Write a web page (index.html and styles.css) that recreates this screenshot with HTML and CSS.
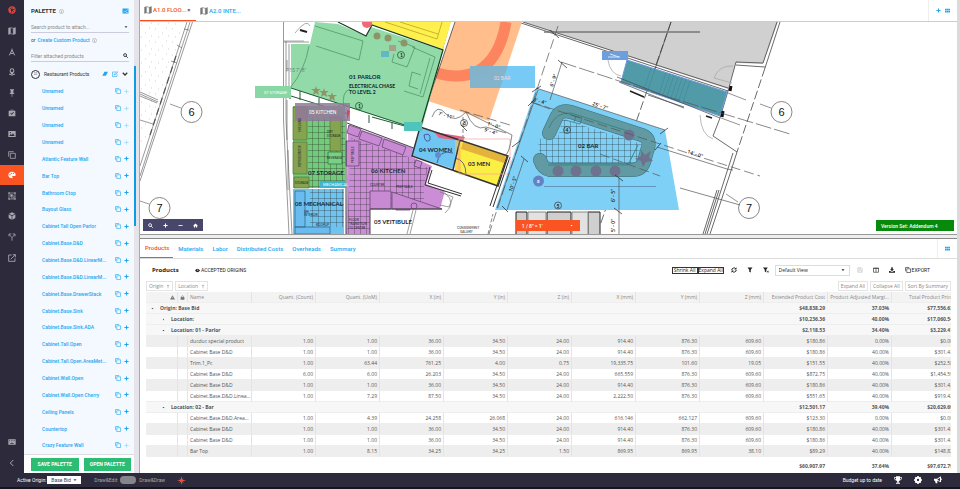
FILE: index.html
```html
<!DOCTYPE html>
<html lang="en">
<head>
<meta charset="utf-8">
<title>Palette</title>
<link rel="stylesheet" href="styles.css">
</head>
<body>
<svg class="sprite" aria-hidden="true">
  <symbol id="logo" viewBox="0 0 24 24"><circle cx="12" cy="12" r="11" fill="#e2453c"/><path d="M12 12 5 5M12 12l9-3M12 12l-3 10M12 12l6 7M12 12V3" stroke="#2d2b3a" stroke-width="2"/><circle cx="12" cy="12" r="3" fill="#2d2b3a"/></symbol>
  <symbol id="map" viewBox="0 0 24 24"><path d="M1 3l7-2v20l-7 2zM16 3l7-2v20l-7 2z"/><path d="M8 2l8 2v18l-8-2" fill="none" stroke="currentColor" stroke-width="2"/></symbol>
  <symbol id="compass" viewBox="0 0 24 24"><path d="M12 2v5M12 6L4 22M12 6l8 16M7 15q5 4 10 0" fill="none" stroke="currentColor" stroke-width="3"/></symbol>
  <symbol id="pin" viewBox="0 0 24 24"><path fill-rule="evenodd" d="M12 1a7 7 0 0 1 7 7c0 5-7 12-7 12S5 13 5 8a7 7 0 0 1 7-7zm0 3a4 4 0 1 0 0 8 4 4 0 0 0 0-8z"/><path d="M3 18q9 7 18 0" fill="none" stroke="currentColor" stroke-width="3"/></symbol>
  <symbol id="tack" viewBox="0 0 24 24"><path d="M6 1h12v3h-2v7l4 4h-7v8h-2v-8H4l4-4V4H6z"/></symbol>
  <symbol id="task" viewBox="0 0 24 24"><path fill-rule="evenodd" d="M2 5h6V2h8v3h6v17H2zM10 4v2h4V4zM7 13l4 5 7-8-2-2-5 6-2-3z"/></symbol>
  <symbol id="image" viewBox="0 0 24 24"><path fill-rule="evenodd" d="M1 3h22v18H1zM4 18h16l-5-8-4 5-3-3zM7 6a2 2 0 1 0 0 4 2 2 0 0 0 0-4z"/></symbol>
  <symbol id="copy" viewBox="0 0 24 24"><path d="M17 2H2v15M7 7h15v15H7z" fill="none" stroke="currentColor" stroke-width="2.4"/></symbol>
  <symbol id="paint" viewBox="0 0 24 24"><path fill-rule="evenodd" d="M12 2C6 2 1 6 1 12s5 10 11 10c3 0 2-3 1-4s0-3 2-3h4c3 0 4-2 4-4 0-5-5-9-11-9zM6 9a2 2 0 1 1 0 4 2 2 0 0 1 0-4zm4-4a2 2 0 1 1 0 4 2 2 0 0 1 0-4zm6 0a2 2 0 1 1 0 4 2 2 0 0 1 0-4z"/></symbol>
  <symbol id="group" viewBox="0 0 24 24"><path d="M3 3h18v18H3z" fill="none" stroke="currentColor" stroke-width="2"/><path d="M1 1h4v4H1zM19 1h4v4h-4zM1 19h4v4H1zM19 19h4v4h-4zM7 7h7v7H7z"/><path d="M16 11h2v7h-8v-2" fill="none" stroke="currentColor" stroke-width="2"/></symbol>
  <symbol id="box" viewBox="0 0 24 24"><path d="M12 1l9 4-9 5-9-5zM2 7l9 5v11l-9-5zM22 7l-9 5v11l9-5z"/></symbol>
  <symbol id="split" viewBox="0 0 24 24"><path d="M12 23v-9L4 5M12 14l8-9M3 10V3h7M14 3h7v7" fill="none" stroke="currentColor" stroke-width="2.4"/></symbol>
  <symbol id="open" viewBox="0 0 24 24"><path d="M11 3H2v19h19v-9M14 2h8v8M22 2L8 16" fill="none" stroke="currentColor" stroke-width="2.6"/></symbol>
  <symbol id="keys" viewBox="0 0 24 24"><path fill-rule="evenodd" d="M1 4h22v16H1zM4 7v2h2V7zm5 0v2h2V7zm5 0v2h2V7zm4 0v2h2V7zM4 11v2h2v-2zm5 0v2h2v-2zm5 0v2h2v-2zM7 16v2h10v-2z"/></symbol>
  <symbol id="left" viewBox="0 0 24 24"><path d="M16 3l-9 9 9 9" fill="none" stroke="currentColor" stroke-width="3"/></symbol>
  <symbol id="down" viewBox="0 0 24 24"><path d="M3 7l9 9 9-9" fill="none" stroke="currentColor" stroke-width="5"/></symbol>
  <symbol id="caret" viewBox="0 0 24 24"><path d="M3 7h18l-9 11z"/></symbol>
  <symbol id="right" viewBox="0 0 24 24"><path d="M8 4l9 8-9 8z"/></symbol>
  <symbol id="info" viewBox="0 0 24 24"><circle cx="12" cy="12" r="10" fill="none" stroke="currentColor" stroke-width="3"/><path d="M12 10v8M12 6v2" stroke="currentColor" stroke-width="4"/></symbol>
  <symbol id="card" viewBox="0 0 24 24"><path d="M0 2h24v20H0z"/><path d="M3 18l6-7 4 4 8-10M14 18h7" stroke="#fff" stroke-width="2" fill="none"/></symbol>
  <symbol id="find" viewBox="0 0 24 24"><circle cx="10" cy="10" r="7" fill="none" stroke="currentColor" stroke-width="4"/><path d="M15 15l8 8" stroke="currentColor" stroke-width="4"/></symbol>
  <symbol id="erase" viewBox="0 0 24 24"><path d="M10 3h14l-9 16H1z"/></symbol>
  <symbol id="edit" viewBox="0 0 24 24"><path d="M15 4H2v18h18V13M8 16l2-5 11-9 3 3-11 9z" fill="none" stroke="currentColor" stroke-width="2.4"/></symbol>
  <symbol id="plus" viewBox="0 0 24 24"><path d="M12 2v20M2 12h20" stroke="currentColor" stroke-width="5"/></symbol>
  <symbol id="minus" viewBox="0 0 24 24"><path d="M2 12h20" stroke="currentColor" stroke-width="4"/></symbol>
  <symbol id="home" viewBox="0 0 24 24"><path d="M12 2L0 13h4v9h6v-6h4v6h6v-9h4z"/></symbol>
  <symbol id="cells" viewBox="0 0 24 24"><path d="M0 3h7v8H0zM8 3h8v8H8zM17 3h7v8h-7zM0 13h7v8H0zM8 13h8v8H8zM17 13h7v8h-7z"/></symbol>
  <symbol id="eye" viewBox="0 0 24 24"><path d="M0 12q12-17 24 0-12 17-24 0z"/><circle cx="13" cy="10" r="3" fill="#fff"/></symbol>
  <symbol id="sync" viewBox="0 0 24 24"><path d="M3 12a9 9 0 0 1 16-5M21 12a9 9 0 0 1-16 5" fill="none" stroke="currentColor" stroke-width="4"/><path d="M22 1v9h-9zM2 23v-9h9z"/></symbol>
  <symbol id="funnel" viewBox="0 0 24 24"><path d="M2 2h20l-7 9v11l-6-3v-8z"/></symbol>
  <symbol id="funnelx" viewBox="0 0 24 24"><path d="M0 2h19l-6 9v10l-6-3v-7z"/><path d="M16 15l7 7M23 15l-7 7" stroke="currentColor" stroke-width="3"/></symbol>
  <symbol id="save" viewBox="0 0 24 24"><path d="M3 3h14l4 4v14H3zM7 3v6h8V3M7 21v-8h10v8" fill="none" stroke="currentColor" stroke-width="2"/></symbol>
  <symbol id="cols" viewBox="0 0 24 24"><path d="M2 4h20v17H2zM2 6h20M12 6v15" fill="none" stroke="currentColor" stroke-width="2.4"/></symbol>
  <symbol id="load" viewBox="0 0 24 24"><path d="M9 1h6v8h5l-8 8-8-8h5zM0 16h5l3 3h8l3-3h5v7H0z"/></symbol>
  <symbol id="warn" viewBox="0 0 24 24"><path d="M12 1l12 21H0zM11 8v8h2V8z" fill-rule="evenodd"/></symbol>
  <symbol id="lock" viewBox="0 0 24 24"><path d="M3 10h18v13H3z"/><path d="M7 11V7q5-8 10 0v4" fill="none" stroke="currentColor" stroke-width="3"/></symbol>
  <symbol id="up" viewBox="0 0 24 24"><path d="M12 23V3M5 9l7-7 7 7" fill="none" stroke="currentColor" stroke-width="3"/></symbol>
  <symbol id="spark" viewBox="0 0 24 24"><path d="M12 0l2 9 6-5-5 6 9 2-9 2 5 6-6-5-2 9-2-9-6 5 5-6-9-2 9-2-5-6 6 5z"/></symbol>
  <symbol id="cup" viewBox="0 0 24 24"><path d="M6 1h12v3h6q0 9-8 10l-2 3v3h4v3H6v-3h4v-3l-2-3Q0 13 0 4h6zM2 6q1 4 4 5V6zm16 0v5q3-1 4-5z" fill-rule="evenodd"/></symbol>
  <symbol id="gear" viewBox="0 0 24 24"><circle cx="12" cy="12" r="6.500" fill="none" stroke="currentColor" stroke-width="6"/><path d="M12 0v5M12 19v5M0 12h5M19 12h5M4 4l3 3M17 17l3 3M4 20l3-3M17 7l3-3" stroke="currentColor" stroke-width="5"/></symbol>
  <symbol id="horn" viewBox="0 0 24 24"><path d="M0 8h9L21 1v18l-11-5v8H5l-2-8H0zM18 6l-7 4v2l7 3z" fill-rule="evenodd"/><path d="M22 7l2 1v4l-2 1z"/></symbol>
</svg>

<div class="app">
  <nav class="rail" aria-label="Sections">
    <div class="rail-list">
      <a href="#" aria-label="Home"><svg class="ic"><use href="#logo"/></svg></a>
      <a href="#" aria-label="Plans"><svg class="ic"><use href="#map"/></svg></a>
      <a href="#" aria-label="Drafting"><svg class="ic"><use href="#compass"/></svg></a>
      <a href="#" aria-label="Places"><svg class="ic"><use href="#pin"/></svg></a>
      <a href="#" aria-label="Pins"><svg class="ic"><use href="#tack"/></svg></a>
      <a href="#" aria-label="Tasks"><svg class="ic"><use href="#task"/></svg></a>
      <a href="#" aria-label="Images"><svg class="ic"><use href="#image"/></svg></a>
      <a href="#" aria-label="Copies"><svg class="ic"><use href="#copy"/></svg></a>
      <a href="#" class="on" aria-label="Palette"><svg class="ic"><use href="#paint"/></svg></a>
      <a href="#" aria-label="Groups"><svg class="ic"><use href="#group"/></svg></a>
      <a href="#" aria-label="Models"><svg class="ic"><use href="#box"/></svg></a>
      <a href="#" aria-label="Branches"><svg class="ic"><use href="#split"/></svg></a>
      <a href="#" aria-label="Open"><svg class="ic"><use href="#open"/></svg></a>
    </div>
    <div class="rail-end">
      <a href="#" aria-label="Shortcuts"><svg class="ic"><use href="#keys"/></svg></a>
      <a href="#" aria-label="Collapse"><svg class="ic"><use href="#left"/></svg></a>
    </div>
  </nav>

  <aside class="palette">
    <div class="palette-top">
      <h1>PALETTE <svg class="ic dim"><use href="#info"/></svg><svg class="ic card"><use href="#card"/></svg></h1>
      <div class="field"><input aria-label="Search product to attach" placeholder="Search product to attach..."><svg class="ic small"><use href="#caret"/></svg></div>
      <p class="or">or <a href="#">Create Custom Product</a> <svg class="ic dim"><use href="#info"/></svg></p>
      <div class="field"><input aria-label="Filter attached products" placeholder="Filter attached products"><svg class="ic"><use href="#find"/></svg></div>
    </div>
    <div class="palette-group">
      <span class="count">22</span><span class="grow">Restaurant Products</span>
      <svg class="ic blue"><use href="#erase"/></svg><svg class="ic blue"><use href="#edit"/></svg><svg class="ic"><use href="#down"/></svg>
    </div>
    <ul class="items" id="items"></ul>
    <div class="palette-end"><button>SAVE PALETTE</button><button>OPEN PALETTE</button></div>
  </aside>
  <div class="track"><span></span></div>

  <main class="main">
    <div class="sheets">
      <a class="sheet on" href="#"><svg class="ic"><use href="#map"/></svg>A1.0 FLOO...<b>×</b></a>
      <a class="sheet" href="#"><svg class="ic"><use href="#map"/></svg>A2.0 INTE...</a>
      <div class="corner"><svg class="ic"><use href="#plus"/></svg><svg class="ic"><use href="#cells"/></svg></div>
    </div>

    <section class="plan" aria-label="Floor plan">
      <svg class="drawing" viewBox="140 22 817 212" preserveAspectRatio="xMidYMid slice">
        <defs>
          <pattern id="tile" width="6" height="6" patternUnits="userSpaceOnUse"><path d="M0 0H6M0 0V6" stroke="#222" stroke-opacity=".75" stroke-width=".8" fill="none"/></pattern>
          <pattern id="grit" width="17" height="13" patternUnits="userSpaceOnUse"><path d="M2 3h.6M9 7h.6M13 2h.6M5 11h.6M15 10h.6" stroke="#777" stroke-width=".6"/></pattern>
        </defs>
        <path d="M140 22h45L140 158z" fill="url(#grit)"/>
        <g fill="none" stroke="#555" stroke-width=".6">
          <path d="M187 22L140 166M190 22L140 176M192.500 22L140 181M184 29l5 1M177 45l5 3M171 61l6 2M153 124l-13-4M140 92l18 8M140 94l18 8M140 96l17 7M170 104l11 4M140 201l9 3"/>
          <path d="M176 56L150 135" stroke-width="1.200" stroke-dasharray="7 4"/>
          <path d="M283.500 22V120L289 234M286 41V120L292 234M284 42h25M289 44V90M287 60v10M287 100v40M288 150v40"/>
        </g>
        <g fill="#fff" stroke="#555" stroke-width=".7"><circle cx="191.500" cy="112" r="10.500"/><circle cx="159.500" cy="208" r="10.500"/><circle cx="781.500" cy="112" r="10.500"/><circle cx="749" cy="208" r="10.500"/></g>
        <g class="axis"><text x="191.500" y="116">6</text><text x="159.500" y="212">7</text><text x="781.500" y="116">6</text><text x="749" y="212">7</text></g>

        <path d="M523 22L728 89l8-26 27 1 15-42z" fill="#d0d0d0"/>
        <g fill="none" stroke="#444" stroke-width=".8">
          <path d="M518 22L728 91l8-29 27 1 14-41M523 22L728 88M736 65l29 2M780 22L765 68M671 22l-17 50M728 91L720 118M713 136l24 16M720 118l-7 18M733 153l-26 81M737 152l-8 25-19 57M719 190l-14 44M717 190l-14 44"/>
          <path d="M765 68L737 152M671 22L597 234" stroke-dasharray="9 3"/>
          <path d="M728 93l18 7M760 104l11 4M721 118l19 7M726 194l12 8" stroke="#777"/>
          <path d="M714 78q5-13 19-12M714 78l18 5M608 60q2 14 13 16M700 115q1 20 13 24" stroke="#aaa"/>
          <path d="M544 32h156" stroke="#777" stroke-width="1.400"/>
        </g>
        <path d="M627 60l100 32-7 24-99-34z" fill="#519aa8" stroke="#6c98df" stroke-width="1"/>
        <path d="M666 73l-7 21M670 74l-7 21M674 75l-7 21M678 77l-7 21M682 78l-7 21M686 79l-7 21M690 81l-7 21M651 68l-7 21M655 69l-7 21" stroke="#3f8793" stroke-width=".6"/>
        <path d="M617 77l103 41M619 82l65 26M648 95l36 12" stroke="#444" stroke-width=".7" fill="none"/>
        <path d="M731 86l-1 5M723 111l-1 6" stroke="#111" stroke-width="3"/><path d="M630 91l14 6M706 116l6 2" stroke="#222" stroke-width="1.600"/>
        <rect x="602" y="51" width="26" height="9" fill="#6c9fdb"/>
        <path d="M610 54l9 3M608 57h12" stroke="#d7e6f8" stroke-width="1"/>

        <path d="M455 22h67L489 121 428 101z" fill="#ffbe8c"/>
        <path d="M437 73Q460 80 478 71Q500 58 506 22" fill="none" stroke="#fc855f" stroke-width="11"/>
        <path d="M450 22L420 130M455 22L428 101" stroke="#444" stroke-width=".8"/>
        <path d="M372 22h79l-8 27-73-25z" fill="#fff04d"/>
        <path d="M385 22l52 17 5-17M400 22l38 12" fill="none" stroke="#aa9c22" stroke-width=".7"/>
        <path d="M315 22l23 2 28 12 5-9 72 23-22 81-130-43V44h19z" fill="#92dba8"/>
        <path d="M338 22l28 14 6-11 71 25-23 79" fill="none" stroke="#163b22" stroke-width="1.200"/>
        <path d="M340 22l24 11 5-10-4-2z" fill="#fff"/>
        <circle cx="367" cy="23" r="5" fill="#ed6a76"/>
        <g fill="none" stroke="#4a8c60" stroke-width=".7">
          <path d="M315 26l48 15-4 19-43-14M398 41l17 6-8 20-15-5 2-8M412 47l23 10-12 40-19-6M290 88q15-18 19-42M344 108q-3-16 6-19M430 58l-10 36M421 75l-9-3-3 14 9 3"/>
        </g>
        <g fill="none" stroke="#1f5a34" stroke-width="1"><path d="M291 88l129 42M291 96l58 18M300 91v9M319 98v9M339 105v8M369 115v8M392 123v6M372 117l47 13M290 89v10"/></g>
        <g fill="#8f9468"><circle cx="377" cy="36" r="3.500"/><circle cx="388" cy="38" r="3.500"/><circle cx="404" cy="43" r="3.500"/><path d="M316 86l1 3h4l-3 2 1 4-3-2-3 2 1-4-3-2h4zM324 88l1 3h4l-3 2 1 4-3-2-3 2 1-4-3-2h4zM332 92l1 3h4l-3 2 1 4-3-2-3 2 1-4-3-2h4z"/></g>
        <path d="M381 51h8v6h-8z" fill="#61b7c3"/><path d="M389 45h7v6h-7z" fill="#a79f89"/>
        <g fill="none" stroke="#28563a" stroke-width=".8"><circle cx="401" cy="55" r="3.500"/><circle cx="359" cy="106" r="3.500"/></g>
        <text x="400" y="57" class="note">1</text><text x="358" y="108" class="note">1</text>
        <path d="M295 33q12-15 15-7M284 41h20" fill="none" stroke="#888" stroke-width=".7"/>
        <path d="M300 30l7 2" stroke="#222" stroke-width="2"/>
        <text x="286" y="72" class="faint">P15 7'/8"</text>

        <path d="M293 106h52v82h-52z" fill="#72ca7b"/><path d="M308 117h37v71h-37z" fill="url(#tile)"/>
        <g fill="#86a350" stroke="#4d7a35" stroke-width=".7"><path d="M293 107h14v33h-14zM293 142h14v32h-14zM294 177h15v11h-15zM330 117h11v34h-11z"/></g>
        <path d="M328 152h14v12h-14z" fill="#79cf85" stroke="#2f6d3a" stroke-width=".7"/>
        <path d="M293 189h51v45h-51z" fill="#6fc3ef"/><path d="M310 189h34v38h-34z" fill="url(#tile)"/>
        <path d="M295 191h10v36h-10zM295 227h35v7h-35z" fill="#6abcf0" stroke="#2a5f82" stroke-width=".7"/>
        <path d="M348 125l65 23-1 9 20 9-6 18 19 7-5 18h-70v25h-24z" fill="#cb8ed6"/>
        <path d="M351 138l61 20 16 10-4 18v22h-54v26h-23z" fill="url(#tile)"/>
        <g fill="#c88bd3" stroke="#6b4677" stroke-width=".8"><path d="M346 141h13v25h-13zM370 191h21v18h-21zM396 199h14v11h-14zM349 125l12 4-3 8-11-4zM362 131l20 7-3 8-20-7zM384 139l22 8-3 8-21-8zM416 160l6 2-2 6-6-2z"/><path d="M392 192l50 17h-50z"/><circle cx="414" cy="206" r="3"/></g>
        <path d="M346 119v115M347 123l72 27M370 209h72M370 209v25" stroke="#444" stroke-width="1" fill="none"/>
        <path d="M295 103h55v18h-55z" fill="#92789a" fill-opacity=".85"/>
        <path d="M347 110l3 1-3 9z" fill="#d7445f"/>

        <path d="M420 128l41 12-8 29-42-14z" fill="#70c6f2"/>
        <path d="M461 140l46 15-10 30-43-13z" fill="#fbee45"/>
        <path d="M463 142l43 14-2 7-43-14z" fill="#e4b33c"/>
        <path d="M434 132l31 5-2 4-24-3z" fill="#df6688"/><path d="M455 140h6v32h-6z" fill="#ffc447" fill-opacity=".6"/>
        <path d="M420 127l88 29-10 30-86-30zM460 140l-7 30" fill="none" stroke="#333" stroke-width="1.400"/>
        <path d="M507 156l-17 50M510 157l-17 50M430 167l-5 18 36 11M432 170l-4 13 34 11" fill="none" stroke="#333" stroke-width="1"/>
        <path d="M424 135q7-3 6 5-5 4-6-5M437 163q2-14 16-10M466 175q0-15-11-17" fill="none" stroke="#337" stroke-width=".7"/><circle cx="438" cy="155" r="3" fill="#648bc8"/>
        <path d="M459 139h51v35h-51z" fill="none" stroke="#f5a0a0" stroke-width=".7"/>
        <path d="M440 192l13 5-4 10-9-2M445 193q12 10 0 20M416 210l-6 24M413 210l-6 24" fill="none" stroke="#777" stroke-width=".7"/>

        <path d="M536 88l129 42 14 80H495z" fill="#7fd0f7"/>
        <path d="M562 119l80 25-4 19h-98l-2-24 20-1z" fill="url(#tile)"/>
        <path d="M549 133L556 118Q560 109 571 112L642 135Q652 139 647 151L644 162Q641 170 632 170H550Q543 169 540 160" fill="none" stroke="#34727c" stroke-width="14" stroke-linecap="round"/>
        <path d="M549 133L556 118Q560 109 571 112L642 135Q652 139 647 151L644 162Q641 170 632 170H550Q543 169 540 160" fill="none" stroke="#629aa3" stroke-width="13" stroke-linecap="round"/>
        <path d="M549 128q6-16 22-15l63 20M548 165h80l10-20" fill="none" stroke="#37897a" stroke-width="1"/>
        <path d="M566 113l16 5-2 6-15-4M576 116l-2 6" fill="none" stroke="#34727c" stroke-width=".7"/>
        <g fill="#6d728f"><circle cx="558" cy="171" r="5.500"/><circle cx="576" cy="171" r="5.500"/><circle cx="596" cy="171" r="5.500"/><circle cx="615" cy="171" r="5.500"/><circle cx="629" cy="135" r="5.500"/><path d="M641 150l4 5 6-4-2 6 4 4-7 1-3 5-2-6-6-2 6-3z"/></g>
        <circle cx="538.500" cy="181" r="5.500" fill="#6284c5"/><text x="537" y="183" class="tag">S</text>
        <path d="M544 186.500h112" stroke="#5a86b0" stroke-width=".8"/>
        <g fill="none" stroke="#555" stroke-width=".7">
          <path d="M561 62L665 96M665 96L790 134" stroke-dasharray="16 3"/>
          <path d="M558 26L489 234M531 102L700 157 760 176M460 110l50 15M600 154l60 22" stroke-dasharray="10 4"/>
          <path d="M536 88l129 42M562 62l-12 38M531 102l19 7M657 147l70 22M727 169l6 1M680 188l60 17M524 159l-17 51M619 178v56M538 90L497 208"/>
          <path d="M432 117q5-14 14-3 9 10 20-2 8 20 20 15l20 6M466 112l46 23q-3 20-7 20"/>
          <path d="M550 30l9 8M558 60l9 8M532 92l9-6M528 106l6-6M660 134l8-6M655 150l6-7M615 175l8 6M502 206l6 6M521 156l7 6M512 147l8-6M461 125l6 6M614 208l8 6" stroke="#222"/>
          <path d="M463 117v20M488 234l5-20" stroke-dasharray="4 2"/>
        </g>
        <g fill="none" stroke="#333" stroke-width=".7"><circle cx="464" cy="123" r="3.500"/><circle cx="567" cy="130" r="3.500"/><circle cx="558" cy="205.500" r="3.500"/></g>
        <text x="463" y="125" class="note">8</text><text x="565.500" y="132" class="note">4</text><text x="556.500" y="207.500" class="note">5</text>
        <g class="dim-text">
          <text transform="translate(592 105) rotate(18)">25' - 7"</text><text transform="translate(687 153) rotate(18)">14' - 0"</text><text transform="translate(553 87) rotate(-72)">6' - 9"</text>
          <text transform="translate(533 101) rotate(16)">3' - 4"</text><text transform="translate(487 125) rotate(18)">1' - 0"</text><text transform="translate(484 131) rotate(18)">9' - 4"</text><text transform="translate(438 115) rotate(16)">7' - 11"</text>
          <text transform="translate(512 192) rotate(-72)">10' - 5"</text><text transform="translate(615 202) rotate(-90)">6' - 5"</text><text transform="translate(615 232) rotate(-90)">5' - 0"</text>
        </g>
        <g fill="#cfcfcf" stroke="#222" stroke-width="1"><path d="M516 212h11v24h-11zM547 212h24v24h-24zM588 212h12v24h-12z"/><path d="M528 212h18v24h-18zM572 212h16v24h-16z" fill="#e2e2e2" stroke="#888"/></g>
        <path d="M470 66h65v22h-65z" fill="#6ac6f4" fill-opacity=".92"/><path d="M470 66h38L500 88h-30z" fill="#88aec0" fill-opacity=".75"/>
        <text x="494" y="80" class="label pink">02 BAR</text>
        <path d="M255 86h36v12h-36z" fill="#8ad7a6"/><text x="264" y="94" class="tag soft">07 STORAGE</text>
        <text x="309" y="114" class="label">05 KITCHEN</text>
        <path d="M320 181h26v7h-26z" fill="#3db5cf"/><text x="323" y="186" class="tag soft">MECHANICAL</text>
        <path d="M404 122h18v9h-18z" fill="#4ec4bb"/>
        <g class="room">
          <text x="349" y="79">01 PARLOR</text><text x="419" y="152">04 WOMEN</text><text x="468" y="166">03 MEN</text><text x="371" y="173">06 KITCHEN</text><text x="308" y="175">07 STORAGE</text><text x="295" y="206">08 MECHANICAL</text><text x="374" y="224">05 VEITIBULE</text><text x="578" y="148">02 BAR</text>
        </g>
        <g class="room memo"><text x="349" y="88">ELECTRICAL CHASE</text><text x="349" y="94">TO LEVEL 2</text></g>
        <g class="fine"><text x="457" y="229">CONSIGNMENT</text><text x="460" y="233">GALLERY</text><text x="349" y="221">FLOOR</text><text x="349" y="225">TRANSITION</text><text x="349" y="229">TO CENTER</text><text x="370" y="186">COUNTER</text><text x="396" y="188">PREP TABLE</text><text x="304" y="213">SEE</text><text x="304" y="216">INTERIOR</text><text x="316" y="226">ROOF UP</text><text x="327" y="159">BEVERAGE</text><text x="327" y="133">DRY</text><text x="327" y="137">STORAGE</text><text x="295" y="184">STORAGE</text><text transform="translate(301 132) rotate(-90)">SHELVING</text><text transform="translate(301 167) rotate(-90)">REFRIGERATOR</text><text transform="translate(354 163) rotate(-90)">PREP TABLE</text></g>
      </svg>
      <div class="zoombar">
        <button aria-label="Search plan"><svg class="ic"><use href="#find"/></svg></button><button aria-label="Zoom in"><svg class="ic"><use href="#plus"/></svg></button><button aria-label="Zoom out"><svg class="ic"><use href="#minus"/></svg></button><button aria-label="Fit"><svg class="ic"><use href="#home"/></svg></button>
      </div>
      <div class="scale"><select aria-label="Scale"><option>1 / 8" = 1'</option></select><svg class="ic tiny"><use href="#caret"/></svg></div>
      <button class="version">Version Set: Addendum 4</button>
    </section>
    <div class="splitter"></div>

    <div class="tabs">
      <a class="on" href="#">Products</a><a href="#">Materials</a><a href="#">Labor</a><a href="#">Distributed Costs</a><a href="#">Overheads</a><a href="#">Summary</a>
      <div class="corner"><svg class="ic"><use href="#cells"/></svg></div>
    </div>
    <section class="products">
      <div class="bar">
        <h2>Products</h2>
        <span class="origins"><svg class="ic"><use href="#eye"/></svg> ACCEPTED ORIGINS</span>
        <div class="bar-end">
          <span class="pair"><button>Shrink All</button><button>Expand All</button></span>
          <svg class="ic"><use href="#sync"/></svg><svg class="ic"><use href="#funnel"/></svg><svg class="ic"><use href="#funnelx"/></svg>
          <span class="view"><select aria-label="View"><option>Default View</option></select><svg class="ic small"><use href="#caret"/></svg></span>
          <svg class="ic off"><use href="#save"/></svg><svg class="ic"><use href="#cols"/></svg><svg class="ic"><use href="#load"/></svg>
          <span class="export"><svg class="ic"><use href="#copy"/></svg>EXPORT</span>
        </div>
      </div>
      <div class="chips"><button>Origin <svg class="ic"><use href="#up"/></svg></button><button>Location <svg class="ic"><use href="#up"/></svg></button><span class="grow"></span><button>Expand All</button><button>Collapse All</button><button>Sort By Summary</button></div>
      <div class="clip">
        <table>
          <colgroup><col class="c-mark"><col class="c-lock"><col span="12"></colgroup>
          <thead><tr><th class="mark"><svg class="ic"><use href="#warn"/></svg></th><th class="mark"><svg class="ic"><use href="#lock"/></svg></th><th class="name">Name</th><th>Quant. (Count)</th><th>Quant. (UoM)</th><th>X (in)</th><th>Y (in)</th><th>Z (in)</th><th>X (mm)</th><th>Y (mm)</th><th>Z (mm)</th><th>Extended Product Cost</th><th>Product Adjusted Margi...</th><th>Total Product Price</th></tr></thead>
          <tbody id="rows"></tbody>
          <tfoot><tr><td colspan="11"></td><td>$60,907.97</td><td>37.64%</td><td>$97,672.79</td></tr></tfoot>
        </table>
      </div>
    </section>
  </main>
</div>
<footer class="status">
  <label for="origin">Active Origin:</label>
  <span class="origin"><select id="origin"><option>Base Bid</option></select><svg class="ic small"><use href="#caret"/></svg></span>
  <span class="mode">Draw&amp;Edit <input type="checkbox" aria-label="Draw mode"> Draw&amp;Draw</span>
  <svg class="ic spark"><use href="#spark"/></svg>
  <span class="grow"></span>
  <span>Budget up to date</span>
  <svg class="ic"><use href="#cup"/></svg><svg class="ic"><use href="#gear"/></svg><svg class="ic"><use href="#horn"/></svg>
</footer>
<script src="app.js"></script>
</body>
</html>
```
FILE: styles.css
```css
* { box-sizing: border-box; }
html, body { height: 100%; margin: 0; }
body { display: flex; flex-direction: column; font: 5px/8px Roboto, "Liberation Sans", sans-serif; color: #444; background: #fff; overflow: hidden; }
a { color: #1ea7f0; text-decoration: none; }
button, input, select { font: inherit; color: inherit; margin: 0; padding: 0; border: 0; background: none; border-radius: 0; appearance: none; white-space: nowrap; }
h1, h2, p, ul { margin: 0; padding: 0; }
.sprite { position: absolute; width: 0; height: 0; }
.ic { width: 6px; height: 6px; flex: none; fill: currentColor; display: block; }
.ic.small { width: 4px; height: 4px; }
.ic.tiny { width: 3px; height: 3px; }
.grow { flex: 1; }

.app { flex: 1; min-height: 0; display: flex; }
.rail { width: 24px; flex: none; background: #2d2b3b; display: flex; flex-direction: column; justify-content: space-between; }
.rail a { display: flex; align-items: center; justify-content: center; color: #a9a8b2; flex: 1; }
.rail a.on { background: #fa5422; color: #fff; }
.rail .ic { width: 8px; height: 8px; }
.rail-list { height: 268px; display: flex; flex-direction: column; }
.rail-end { height: 41px; display: flex; flex-direction: column; }

.palette { width: 110px; flex: none; background: #f4f9ff; display: flex; flex-direction: column; }
.palette-top { padding: 6px 5px 0 7px; }
.palette h1 { display: flex; align-items: center; gap: 3px; font-size: 6px; line-height: 10px; font-weight: 700; color: #333; }
.palette .dim { width: 5px; height: 5px; color: #aaa; }
.palette .card { width: 7px; height: 6px; margin-left: auto; color: #1ea7f0; }
.field { display: flex; align-items: center; height: 12px; margin-top: 5px; border-bottom: 1px solid #ccd; padding-right: 1px; }
.field input { flex: 1; min-width: 0; height: 11px; }
.field input::placeholder { color: #888; opacity: 1; }
.field .ic:not(.small) { width: 5px; height: 5px; color: #222; }
.or { display: flex; align-items: center; gap: 2px; margin-top: 2px; height: 10px; }
.or a { font-weight: 500; }
.palette-group { display: flex; align-items: center; gap: 4px; height: 18px; margin-top: 3px; padding: 0 6px 0 7px; color: #333; }
.palette-group .blue { color: #1ea7f0; }
.count { width: 9px; height: 9px; border: 1px solid #333; border-radius: 50%; font-size: 3px; line-height: 7px; text-align: center; }
.items { flex: 1; display: flex; flex-direction: column; list-style: none; }
.items li { flex: 1; display: flex; align-items: center; gap: 3px; padding: 0 5px 0 18px; font-weight: 500; }
.items a { flex: 1; white-space: nowrap; }
.items .ic { color: #1ea7f0; }
.items .ic:last-child { width: 5px; height: 5px; }
.items .pale { opacity: .3; }
.palette-end { display: flex; align-items: center; gap: 5px; height: 19px; padding: 0 3px 0 7px; border-top: 1px solid #ddd; background: #fff; }
.palette-end button { flex: 1; height: 13px; background: #2bbd73; color: #fff; font-weight: 700; }
.track { width: 5px; flex: none; padding-top: 66px; background: #e4e4ea; }
.track span { display: block; width: 2px; height: 160px; background: #0c9be5; }

.main { flex: 1; min-width: 0; display: flex; flex-direction: column; border-left: 1px solid #aaa; border-right: 3px solid #dadada; }
.sheets { display: flex; height: 22px; border-bottom: 1px solid #ccc; flex: none; font-size: 6px; font-weight: 500; }
.sheet { display: flex; align-items: center; gap: 1px; width: 56px; padding-left: 4px; white-space: nowrap; }
.sheet .ic { width: 8px; height: 8px; color: #777; }
.sheet b { color: #555; }
.sheet.on, .tabs .on { color: #f4511e; border-bottom: 1px solid #f4511e; }
.corner { display: flex; align-items: center; gap: 4px; margin-left: auto; padding: 0 7px; border-left: 1px solid #eee; color: #1ea7f0; }
.corner .ic { width: 5px; height: 5px; }

.plan { position: relative; flex: 212 1 0; min-height: 0; overflow: hidden; }
.drawing { width: 100%; height: 100%; display: block; }
.axis { font: 11px "Liberation Sans", sans-serif; text-anchor: middle; fill: #111; }
.room { font: 700 6px Lato, sans-serif; fill: #182c38; }
.room.memo { font-size: 5px; font-weight: 900; }
.tag { font: 700 4px Roboto, sans-serif; fill: #fff; }
.tag.soft { font-weight: 400; }
.label { font: 5px Roboto, sans-serif; fill: #fff; }
.label.pink { fill: #f6d5dc; }
.note { font: 700 5px Lato, sans-serif; fill: #222; }
.faint { font: 5px Roboto, sans-serif; fill: #68877a; }
.fine { font: 3px Lato, sans-serif; fill: #222; }
.dim-text { font: 600 5px "Open Sans", sans-serif; fill: #222; }
.zoombar { position: absolute; left: 3px; bottom: 3px; width: 60px; height: 12px; display: flex; background: #48466b; color: #fff; }
.zoombar button { flex: 1; display: grid; place-items: center; }
.zoombar .ic { width: 5px; height: 5px; }
.scale { position: absolute; left: 46%; bottom: 3px; display: flex; align-items: center; width: 64px; height: 11px; padding: 0 7px 0 6px; background: #fa5422; color: #fff; font-weight: 500; }
.scale select { flex: 1; }
.version { position: absolute; right: 3px; bottom: 3px; width: 78px; height: 11px; padding-left: 5px; text-align: left; background: #078a0b; color: #fff; font-weight: 500; }
.splitter { height: 5px; flex: none; border-top: 1px solid #999; border-bottom: 1px solid #888; background: #eee; }

.tabs { display: flex; height: 20px; flex: none; border-bottom: 1px solid #ddd; font-size: 6px; font-weight: 500; }
.tabs a { display: flex; align-items: center; padding: 0 4px 0 5px; }
.products { flex: 214 1 0; min-height: 0; padding: 0 6px; font-family: "Open Sans", sans-serif; }
.bar { display: flex; align-items: center; height: 22px; padding: 0 21px 0 6px; color: #222; }
.bar h2 { font: 700 6px/8px "Open Sans", sans-serif; width: 43px; }
.origins, .export { display: flex; align-items: center; gap: 1px; font-family: Roboto, sans-serif; }
.origins .ic { width: 5px; height: 5px; }
.bar-end { display: flex; align-items: center; gap: 10px; margin-left: auto; }
.pair { display: flex; margin-right: -3px; }
.pair button { border: 1px solid #333; height: 7px; width: 26px; line-height: 5px; }
.view { position: relative; display: flex; align-items: center; width: 75px; height: 11px; margin-left: -4px; margin-right: -3px; border: 1px solid #ddd; }
.view select { width: 100%; padding-left: 3px; }
.view .ic { position: absolute; right: 4px; }
.bar .off { color: #bbb; }
.chips { display: flex; gap: 2px; height: 10px; margin-bottom: 1px; color: #888; }
.chips button { display: flex; align-items: center; gap: 3px; padding: 0 2px; border: 1px solid #e4e4e4; }
.chips .ic { width: 4px; height: 5px; }
.clip { overflow: hidden; }
table { width: calc(100% + 5px); table-layout: fixed; border-collapse: separate; border-spacing: 0; color: #555; }
.c-mark { width: 32px; }
.c-lock { width: 10px; }
th, td { height: 11px; padding: 0 2px; line-height: 10px; text-align: right; white-space: nowrap; overflow: hidden; border-right: 1px solid #e4e4e4; border-bottom: 1px solid #eee; font-weight: 400; }
thead { color: #888; background: #f3f3f3; }
.name { text-align: left; padding-left: 2px; }
.mark .ic { width: 5px; height: 5px; margin-left: auto; color: #777; }
.odd { background: #eee; }
.band { background: #f7f7f7; }
.band td { border-right: 0; padding-right: 3px; font-weight: 700; }
.band .title { text-align: left; }
.title span { display: flex; align-items: center; gap: 6px; }
.title .ic { width: 3px; height: 3px; }
.band .level-0 { padding-left: 5px; }
.band .level-1 { padding-left: 16px; }
tfoot td { height: 18px; padding-right: 3px; border: 0; font-weight: 700; }

.status { display: flex; align-items: center; height: 16px; flex: none; padding: 0 18px 0 17px; background: #2d2b3b; border-bottom: 2px solid #16151d; color: #fff; }
.origin { position: relative; display: flex; align-items: center; width: 34px; height: 8px; margin-left: 1px; background: #fff; color: #444; }
.origin select { width: 100%; padding-left: 4px; }
.origin .ic { position: absolute; right: 4px; }
.mode { display: flex; align-items: center; gap: 3px; margin-left: 13px; color: #aaa; }
.mode input { width: 16px; height: 8px; border-radius: 4px; background: #85858d; }
.status .spark { width: 9px; height: 9px; margin-left: 12px; color: #f0503c; }
.status > .ic:not(.spark) { width: 8px; height: 8px; margin-left: 12px; }
```
FILE: app.js
```js
const products = [
  "Unnamed", "Unnamed", "Unnamed", "Unnamed", "Atlantic Feature Wall", "Bar Top", "Bathroom Ctop", "Buyout Glass",
  "Cabinet Tall Open Parlor", "Cabinet.Base.D&D", "Cabinet.Base.D&D.LinearM...", "Cabinet.Base.D&D.LinearM...",
  "Cabinet.Base.DrawerStack", "Cabinet.Base.Sink", "Cabinet.Base.Sink.ADA", "Cabinet.Tall.Open", "Cabinet.Tall.Open.AreaMet...",
  "Cabinet.Wall.Open", "Cabinet.Wall.Open Cherry", "Ceiling Panels", "Countertop", "Crazy Feature Wall"
];
const esc = s => s.replace(/&/g, "&amp;");
const icon = (name, cls = "") => `<svg class="ic ${cls}"><use href="#${name}"/></svg>`;

document.getElementById("items").innerHTML = products.map((p, i) =>
  `<li><a href="#">${esc(p)}</a>${icon("copy")}${icon("plus", i < 4 || i === 21 ? "pale" : "")}</li>`).join("");

// Group rows: [level, icon, title, cost, margin, price]. Product rows: [name, ...values].
const rows = [
  [0, "caret", "Origin: Base Bid", "$48,838.29", "37.03%", "$77,556.63"],
  [1, "right", "Location:", "$10,236.36", "40.00%", "$17,060.54"],
  [1, "caret", "Location: 01 - Parlor", "$2,118.53", "34.40%", "$3,229.41"],
  ["ducduc special product", "1.00", "1.00", "36.00", "34.50", "24.00", "914.40", "876.30", "609.60", "$180.86", "0.00%", "$0.00"],
  ["Cabinet Base D&D", "1.00", "1.00", "36.00", "34.50", "24.00", "914.40", "876.30", "609.60", "$180.86", "40.00%", "$301.43"],
  ["Trim.1_Pc", "1.00", "63.44", "761.25", "4.00", "0.75", "19,335.75", "101.60", "19.05", "$151.55", "40.00%", "$252.58"],
  ["Cabinet Base D&D", "6.00", "6.00", "26.203", "34.50", "24.00", "665.559", "876.30", "609.60", "$872.75", "40.00%", "$1,454.59"],
  ["Cabinet Base D&D", "1.00", "1.00", "36.00", "34.50", "24.00", "914.40", "876.30", "609.60", "$180.86", "40.00%", "$301.43"],
  ["Cabinet.Base.D&D.Linea...", "1.00", "7.29", "87.50", "34.50", "24.00", "2,222.50", "876.30", "609.60", "$551.65", "40.00%", "$919.42"],
  [1, "caret", "Location: 02 - Bar", "$12,501.17", "39.40%", "$20,629.69"],
  ["Cabinet.Base.D&D.Area...", "1.00", "4.39", "24.258", "26.068", "24.00", "616.146", "662.127", "609.60", "$123.30", "0.00%", "$0.00"],
  ["Cabinet Base D&D", "1.00", "1.00", "36.00", "34.50", "24.00", "914.40", "876.30", "609.60", "$180.86", "40.00%", "$301.43"],
  ["Cabinet Base D&D", "1.00", "1.00", "36.00", "34.50", "24.00", "914.40", "876.30", "609.60", "$180.86", "40.00%", "$301.43"],
  ["Bar Top", "1.00", "8.15", "34.25", "34.25", "1.50", "869.95", "869.95", "38.10", "$89.29", "40.00%", "$148.82"]
];
document.getElementById("rows").innerHTML = rows.map((r, i) => {
  if (typeof r[0] === "number") {
    return `<tr class="band"><td class="title level-${r[0]}" colspan="11"><span>${icon(r[1])}${r[2]}</span></td>` +
      r.slice(3).map(v => `<td>${v}</td>`).join("") + "</tr>";
  }
  return `<tr class="${i % 2 ? "odd" : ""}"><td></td><td></td><td class="name">${esc(r[0])}</td>` +
    r.slice(1).map(v => `<td>${v}</td>`).join("") + "</tr>";
}).join("");
```
